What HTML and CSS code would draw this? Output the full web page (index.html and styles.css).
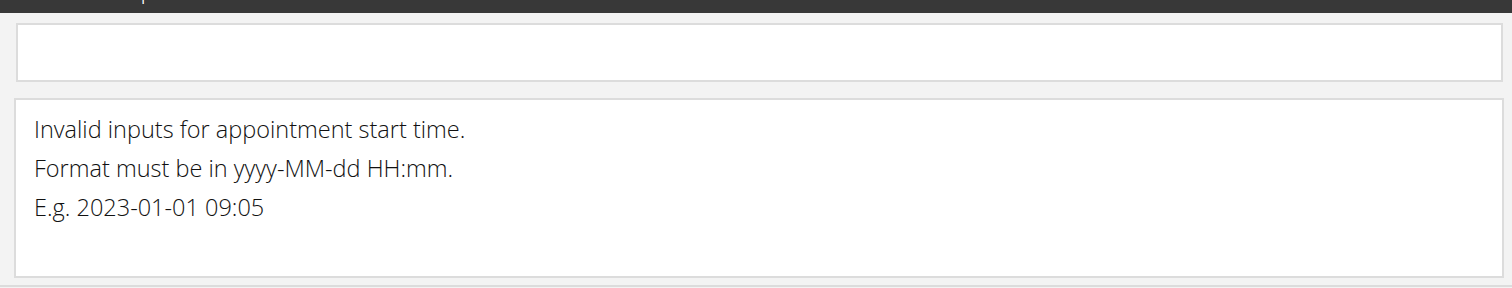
FILE: index.html
```html
<!DOCTYPE html>
<html lang="en">
<head>
  <meta charset="UTF-8">
  <title>Appointment</title>
  <link rel="stylesheet" href="styles.css">
</head>
<body>
  <div class="menubar"><span class="menu-item">Help</span></div>
  <div class="content">
    <div class="box box-empty"></div>
    <div class="box box-message">
      <p>Invalid inputs for appointment start time.</p>
      <p>Format must be in yyyy-MM-dd HH:mm.</p>
      <p>E.g. 2023-01-01 09:05</p>
    </div>
  </div>
  <div class="footer"></div>
</body>
</html>
```

FILE: styles.css
```css
* { box-sizing: border-box; margin: 0; padding: 0; }
html, body {
  width: 100%; height: 100%;
  background-color: #f3f3f3;
  font-family: 'Open Sans', 'Noto Sans', sans-serif;
  overflow: hidden;
}
.menubar {
  height: 13px;
  background-color: #383838;
  overflow: hidden;
  position: relative;
}
.menu-item {
  position: absolute;
  left: 118px;
  top: -16px;
  color: #fff;
  font-size: 15px;
}
.content {
  display: flex;
  flex-direction: column;
}
.box {
  background-color: #ffffff;
  border: 2px solid #dcdcdc;
}
.box-empty {
  margin: 10px 9px 0 16px;
  height: 59px;
}
.box-message {
  margin: 16px 8px 0 14px;
  height: 180px;
  padding: 10px 18px;
  color: #111;
  font-size: 23.5px;
  font-weight: 300;
  line-height: 39px;
}
.footer {
  margin-top: 7px;
  border-top: 2px solid #dcdcdc;
  height: 10px;
}
```
